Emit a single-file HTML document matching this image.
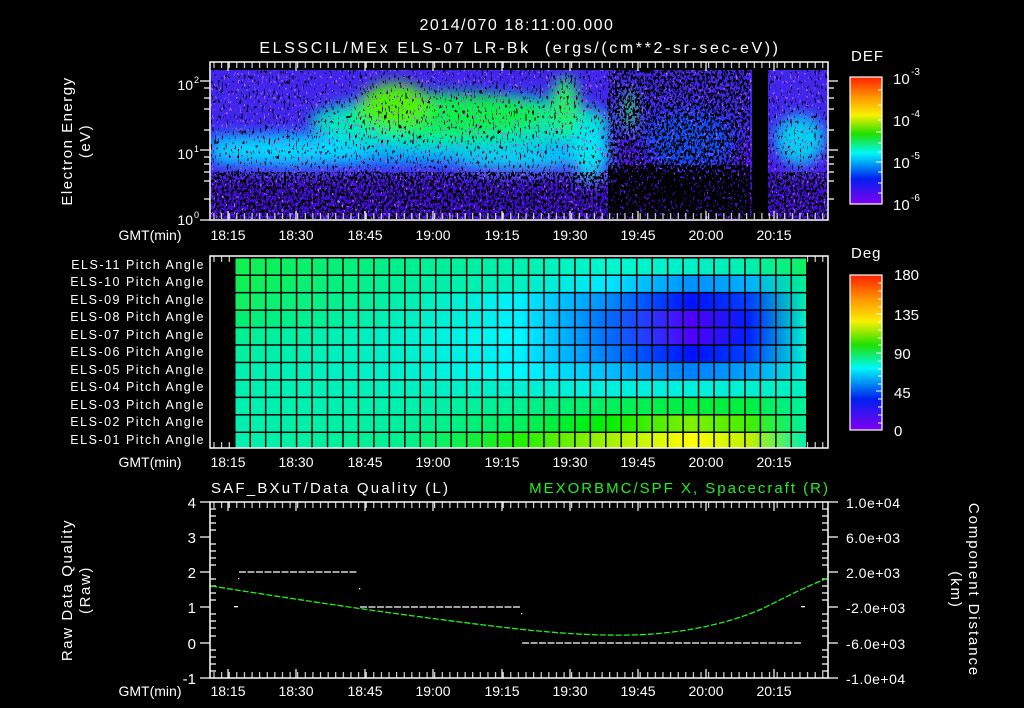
<!DOCTYPE html>
<html><head><meta charset="utf-8"><style>
html,body{margin:0;padding:0;background:#000;}
svg{display:block}
text{font-family:"Liberation Sans",sans-serif;fill:#fff;}
</style></head><body>
<svg width="1024" height="708" viewBox="0 0 1024 708" xmlns="http://www.w3.org/2000/svg">
<defs>
<linearGradient id="cb" x1="0" y1="0" x2="0" y2="1">
<stop offset="0" stop-color="#ff2000"/><stop offset="0.15" stop-color="#ff9000"/><stop offset="0.3" stop-color="#f8f000"/>
<stop offset="0.45" stop-color="#20e000"/><stop offset="0.6" stop-color="#00f8f8"/><stop offset="0.8" stop-color="#0020f0"/><stop offset="1" stop-color="#8000f0"/>
</linearGradient>
<filter id="blur6"><feGaussianBlur stdDeviation="7"/></filter>
<filter id="noise" x="0" y="0" width="100%" height="100%">
<feTurbulence type="fractalNoise" baseFrequency="0.55 0.2" numOctaves="2" seed="4"/>
<feColorMatrix type="matrix" values="0 0 0 0 0  0 0 0 0 0  0 0 0 0 0  3 0 0 0 -1.5"/>
<feComponentTransfer><feFuncA type="discrete" tableValues="0 1"/></feComponentTransfer>
</filter>
<filter id="noiseP" x="0" y="0" width="100%" height="100%">
<feTurbulence type="fractalNoise" baseFrequency="0.5 0.25" numOctaves="2" seed="11"/>
<feColorMatrix type="matrix" values="0 0 0 0 0.45  0 0 0 0 0.1  0 0 0 0 0.95  3 0 0 0 -1.6"/>
<feComponentTransfer><feFuncA type="discrete" tableValues="0 1"/></feComponentTransfer>
</filter>
<filter id="noise2" x="0" y="0" width="100%" height="100%">
<feTurbulence type="fractalNoise" baseFrequency="0.45 0.3" numOctaves="2" seed="9"/>
<feColorMatrix type="matrix" values="0 0 0 0 0  0 0 0 0 0  0 0 0 0 0  3 0 0 0 -1.1"/>
<feComponentTransfer><feFuncA type="discrete" tableValues="0 1"/></feComponentTransfer>
</filter>
<filter id="noise3" x="0" y="0" width="100%" height="100%">
<feTurbulence type="fractalNoise" baseFrequency="0.45 0.3" numOctaves="2" seed="21"/>
<feColorMatrix type="matrix" values="0 0 0 0 0  0 0 0 0 0  0 0 0 0 0  3 0 0 0 -0.7"/>
<feComponentTransfer><feFuncA type="discrete" tableValues="0 1"/></feComponentTransfer>
</filter>
<pattern id="tk" x="210" y="0" width="7.61" height="708" patternUnits="userSpaceOnUse"><rect x="3.5" y="0" width="1" height="708" fill="#fff"/></pattern>
<clipPath id="c1"><rect x="210" y="70" width="618" height="149"/></clipPath>
<linearGradient id="r1" x1="0" x2="1"><stop offset="0" stop-color="#10f050"/><stop offset="0.3" stop-color="#00f090"/><stop offset="0.5" stop-color="#00f0b0"/><stop offset="0.65" stop-color="#00f8d0"/><stop offset="0.8" stop-color="#00f0c8"/><stop offset="0.9" stop-color="#00f0b0"/><stop offset="1" stop-color="#10f060"/></linearGradient>
<linearGradient id="r2" x1="0" x2="1"><stop offset="0" stop-color="#10f050"/><stop offset="0.3" stop-color="#00f0a0"/><stop offset="0.5" stop-color="#00f0c0"/><stop offset="0.65" stop-color="#00e8ff"/><stop offset="0.8" stop-color="#0090ff"/><stop offset="0.9" stop-color="#00b0ff"/><stop offset="1" stop-color="#00f090"/></linearGradient>
<linearGradient id="r3" x1="0" x2="1"><stop offset="0" stop-color="#10f060"/><stop offset="0.3" stop-color="#00f0b0"/><stop offset="0.5" stop-color="#00f0ff"/><stop offset="0.65" stop-color="#0090ff"/><stop offset="0.8" stop-color="#0010ff"/><stop offset="0.9" stop-color="#0040ff"/><stop offset="1" stop-color="#00f0b0"/></linearGradient>
<linearGradient id="r4" x1="0" x2="1"><stop offset="0" stop-color="#00f070"/><stop offset="0.3" stop-color="#00f0c0"/><stop offset="0.5" stop-color="#00f0ff"/><stop offset="0.65" stop-color="#0070ff"/><stop offset="0.8" stop-color="#5000ff"/><stop offset="0.9" stop-color="#0020ff"/><stop offset="1" stop-color="#00f0c0"/></linearGradient>
<linearGradient id="r5" x1="0" x2="1"><stop offset="0" stop-color="#00f090"/><stop offset="0.3" stop-color="#00f0d0"/><stop offset="0.5" stop-color="#00f8ff"/><stop offset="0.65" stop-color="#0070ff"/><stop offset="0.8" stop-color="#5000ff"/><stop offset="0.9" stop-color="#0020ff"/><stop offset="1" stop-color="#00f0d0"/></linearGradient>
<linearGradient id="r6" x1="0" x2="1"><stop offset="0" stop-color="#00f0a0"/><stop offset="0.3" stop-color="#00f0d0"/><stop offset="0.5" stop-color="#00f0ff"/><stop offset="0.65" stop-color="#0080ff"/><stop offset="0.8" stop-color="#0010ff"/><stop offset="0.9" stop-color="#0040ff"/><stop offset="1" stop-color="#00f0d0"/></linearGradient>
<linearGradient id="r7" x1="0" x2="1"><stop offset="0" stop-color="#00f0b0"/><stop offset="0.3" stop-color="#00f0d0"/><stop offset="0.5" stop-color="#00f8ff"/><stop offset="0.65" stop-color="#00c0ff"/><stop offset="0.8" stop-color="#0080ff"/><stop offset="0.9" stop-color="#00a0ff"/><stop offset="1" stop-color="#00f0d0"/></linearGradient>
<linearGradient id="r8" x1="0" x2="1"><stop offset="0" stop-color="#00f0b0"/><stop offset="0.3" stop-color="#00f0c0"/><stop offset="0.5" stop-color="#00f0d0"/><stop offset="0.65" stop-color="#00f0e0"/><stop offset="0.8" stop-color="#00f0e0"/><stop offset="0.9" stop-color="#00f0d0"/><stop offset="1" stop-color="#00f0c0"/></linearGradient>
<linearGradient id="r9" x1="0" x2="1"><stop offset="0" stop-color="#00f0b0"/><stop offset="0.3" stop-color="#00f0b0"/><stop offset="0.5" stop-color="#00f090"/><stop offset="0.65" stop-color="#00f060"/><stop offset="0.8" stop-color="#00f040"/><stop offset="0.9" stop-color="#00f040"/><stop offset="1" stop-color="#00f0a0"/></linearGradient>
<linearGradient id="r10" x1="0" x2="1"><stop offset="0" stop-color="#00f0b0"/><stop offset="0.3" stop-color="#00f0a0"/><stop offset="0.5" stop-color="#00f060"/><stop offset="0.65" stop-color="#00f000"/><stop offset="0.8" stop-color="#80f000"/><stop offset="0.9" stop-color="#40f000"/><stop offset="1" stop-color="#00f0a0"/></linearGradient>
<linearGradient id="r11" x1="0" x2="1"><stop offset="0" stop-color="#00f0b0"/><stop offset="0.3" stop-color="#00f090"/><stop offset="0.5" stop-color="#20f000"/><stop offset="0.65" stop-color="#a0f000"/><stop offset="0.8" stop-color="#ffff00"/><stop offset="0.9" stop-color="#c0f000"/><stop offset="1" stop-color="#00f0b0"/></linearGradient>
<pattern id="gridv" x="234" y="0" width="15.46" height="708" patternUnits="userSpaceOnUse"><rect x="0" y="0" width="1.5" height="708" fill="#000"/></pattern>
<pattern id="gridh" x="0" y="257" width="1024" height="17.45" patternUnits="userSpaceOnUse"><rect x="0" y="0" width="1024" height="1.5" fill="#000"/></pattern>
</defs>

<text x="517" y="30" font-size="16" text-anchor="middle" letter-spacing="1.5">2014/070 18:11:00.000</text>
<text x="520" y="53" font-size="16" text-anchor="middle" letter-spacing="2.6" xml:space="preserve">ELSSCIL/MEx ELS-07 LR-Bk  (ergs/(cm**2-sr-sec-eV))</text>

<!-- TOP SPECTROGRAM -->
<g clip-path="url(#c1)">
<rect x="210" y="70" width="618" height="149" fill="#4a18e8"/>
<rect x="210" y="70" width="618" height="70" fill="#3a30f0" opacity="0.6"/>
<g filter="url(#blur6)">
<rect x="210" y="135" width="400" height="30" fill="#00a8ff"/>
<ellipse cx="290" cy="150" rx="80" ry="16" fill="#00d8ff"/>
<ellipse cx="460" cy="122" rx="150" ry="28" fill="#00e8c0"/>
<ellipse cx="450" cy="115" rx="100" ry="22" fill="#10f050"/>
<ellipse cx="395" cy="105" rx="35" ry="22" fill="#50f010"/>
<ellipse cx="515" cy="162" rx="60" ry="6" fill="#00f0f0"/>
<ellipse cx="565" cy="105" rx="14" ry="28" fill="#20f060"/>
<ellipse cx="590" cy="150" rx="18" ry="28" fill="#00e8f0"/>
<ellipse cx="630" cy="110" rx="6" ry="22" fill="#20f060"/>
<ellipse cx="690" cy="140" rx="45" ry="30" fill="#1050ff"/>
<ellipse cx="800" cy="140" rx="25" ry="25" fill="#00d0f0"/>
<rect x="210" y="180" width="618" height="40" fill="#4010d8"/>
</g>
<rect x="210" y="70" width="618" height="149" fill="#000" filter="url(#noise)"/>
<rect x="210" y="70" width="618" height="149" fill="#000" filter="url(#noiseP)"/>
<rect x="210" y="172" width="618" height="48" fill="#000" filter="url(#noise2)"/>
<rect x="608" y="165" width="142" height="55" fill="#000" filter="url(#noise3)"/>
<rect x="608" y="70" width="142" height="95" fill="#000" filter="url(#noise2)"/>
<rect x="752" y="70" width="16" height="149" fill="#000"/>
</g>
<rect x="210" y="62" width="618" height="158" fill="none" stroke="#fff" stroke-width="1.5"/>
<rect x="210" y="62" width="618" height="6" fill="url(#tk)"/>
<rect x="210" y="213" width="618" height="6" fill="url(#tk)"/>
<g stroke="#fff" stroke-width="1.2">
<path d="M228 62v9M296 62v9M365 62v9M433 62v9M502 62v9M570 62v9M638 62v9M706 62v9M774 62v9"/>
<path d="M228 220v-9M296 220v-9M365 220v-9M433 220v-9M502 220v-9M570 220v-9M638 220v-9M706 220v-9M774 220v-9"/>
<path d="M200 81h10M200 220h10M200 150h10M204 88h6M204 98h6M204 109h6M204 130h6M204 157h6M204 164h6M204 172h6M204 181h6M204 199h6"/>
<path d="M828 81h10M828 150h10M828 88h6M828 98h6M828 109h6M828 130h6M828 157h6M828 164h6M828 172h6M828 181h6M828 199h6"/>
</g>
<text x="193" y="90" font-size="14" text-anchor="end">10</text><text x="194" y="83" font-size="9">2</text>
<text x="193" y="159" font-size="14" text-anchor="end">10</text><text x="194" y="152" font-size="9">1</text>
<text x="193" y="225" font-size="14" text-anchor="end">10</text><text x="194" y="218" font-size="9">0</text>
<text transform="translate(72,141) rotate(-90)" font-size="15" text-anchor="middle" letter-spacing="1.5">Electron Energy</text>
<text transform="translate(90,141) rotate(-90)" font-size="15" text-anchor="middle" letter-spacing="1.5">(eV)</text>

<g font-size="14" text-anchor="middle">
<text x="150" y="240">GMT(min)</text>
<text x="228" y="240">18:15</text><text x="296" y="240">18:30</text><text x="365" y="240">18:45</text><text x="433" y="240">19:00</text><text x="502" y="240">19:15</text><text x="570" y="240">19:30</text><text x="638" y="240">19:45</text><text x="706" y="240">20:00</text><text x="774" y="240">20:15</text>
<text x="150" y="467">GMT(min)</text>
<text x="228" y="467">18:15</text><text x="296" y="467">18:30</text><text x="365" y="467">18:45</text><text x="433" y="467">19:00</text><text x="502" y="467">19:15</text><text x="570" y="467">19:30</text><text x="638" y="467">19:45</text><text x="706" y="467">20:00</text><text x="774" y="467">20:15</text>
<text x="150" y="696">GMT(min)</text>
<text x="228" y="696">18:15</text><text x="296" y="696">18:30</text><text x="365" y="696">18:45</text><text x="433" y="696">19:00</text><text x="502" y="696">19:15</text><text x="570" y="696">19:30</text><text x="638" y="696">19:45</text><text x="706" y="696">20:00</text><text x="774" y="696">20:15</text>
</g>

<text x="851" y="61" font-size="15" letter-spacing="1">DEF</text>
<rect x="850" y="77" width="32" height="127" fill="url(#cb)" stroke="#fff" stroke-width="1.2"/>
<g stroke="#fff" stroke-width="1"><path d="M878 90h4M878 105h4M878 120h4M876 132h6M878 143h4M878 152h4M876 162h6M878 172h4M878 183h4M878 193h4"/></g>
<g font-size="15"><text x="893" y="84">10</text><text x="911" y="75" font-size="10">-3</text>
<text x="893" y="126">10</text><text x="911" y="117" font-size="10">-4</text>
<text x="893" y="168">10</text><text x="911" y="159" font-size="10">-5</text>
<text x="893" y="210">10</text><text x="911" y="201" font-size="10">-6</text></g>

<rect x="234" y="257" width="572" height="18" fill="url(#r1)"/>
<rect x="234" y="274.4" width="572" height="18" fill="url(#r2)"/>
<rect x="234" y="291.9" width="572" height="18" fill="url(#r3)"/>
<rect x="234" y="309.3" width="572" height="18" fill="url(#r4)"/>
<rect x="234" y="326.8" width="572" height="18" fill="url(#r5)"/>
<rect x="234" y="344.2" width="572" height="18" fill="url(#r6)"/>
<rect x="234" y="361.7" width="572" height="18" fill="url(#r7)"/>
<rect x="234" y="379.1" width="572" height="18" fill="url(#r8)"/>
<rect x="234" y="396.6" width="572" height="18" fill="url(#r9)"/>
<rect x="234" y="414" width="572" height="18" fill="url(#r10)"/>
<rect x="234" y="431.5" width="572" height="17" fill="url(#r11)"/>
<rect x="234" y="256" width="573" height="192" fill="url(#gridv)"/>
<rect x="234" y="256" width="572" height="192" fill="url(#gridh)"/>
<rect x="210" y="256" width="618" height="192" fill="none" stroke="#fff" stroke-width="1.5"/>
<rect x="210" y="256" width="24" height="6" fill="url(#tk)"/><rect x="806" y="256" width="22" height="6" fill="url(#tk)"/>
<rect x="210" y="442" width="24" height="6" fill="url(#tk)"/><rect x="806" y="442" width="22" height="6" fill="url(#tk)"/>
<g font-size="12.5" text-anchor="end" letter-spacing="1.5">
<text x="205" y="269">ELS-11 Pitch Angle</text><text x="205" y="286">ELS-10 Pitch Angle</text><text x="205" y="304">ELS-09 Pitch Angle</text><text x="205" y="321">ELS-08 Pitch Angle</text><text x="205" y="339">ELS-07 Pitch Angle</text><text x="205" y="356">ELS-06 Pitch Angle</text><text x="205" y="374">ELS-05 Pitch Angle</text><text x="205" y="391">ELS-04 Pitch Angle</text><text x="205" y="409">ELS-03 Pitch Angle</text><text x="205" y="426">ELS-02 Pitch Angle</text><text x="205" y="444">ELS-01 Pitch Angle</text>
</g>

<text x="851" y="258" font-size="15" letter-spacing="1">Deg</text>
<rect x="850" y="275" width="32" height="155" fill="url(#cb)" stroke="#fff" stroke-width="1.2"/>
<g stroke="#fff" stroke-width="1"><path d="M878 283h4M878 291h4M878 299h4M878 307h4M876 314h6M878 322h4M878 330h4M878 338h4M876 353h6M878 345h4M878 361h4M878 369h4M878 376h4M876 391h6M878 384h4M878 399h4M878 407h4M878 415h4M878 423h4"/></g>
<g font-size="15"><text x="894" y="280">180</text><text x="894" y="320">135</text><text x="894" y="359">90</text><text x="894" y="398">45</text><text x="894" y="436">0</text></g>

<text x="211" y="493" font-size="15" letter-spacing="2.2">SAF_BXuT/Data Quality (L)</text>
<text x="830" y="493" font-size="15" text-anchor="end" letter-spacing="2" style="fill:#20f020">MEXORBMC/SPF X, Spacecraft (R)</text>
<rect x="210" y="502" width="618" height="176" fill="none" stroke="#fff" stroke-width="1.5"/>
<rect x="210" y="502" width="618" height="6" fill="url(#tk)"/>
<rect x="210" y="672" width="618" height="6" fill="url(#tk)"/>
<g stroke="#fff" stroke-width="1.2">
<path d="M228 502v9M296 502v9M365 502v9M433 502v9M502 502v9M570 502v9M638 502v9M706 502v9M774 502v9"/>
<path d="M228 678v-9M296 678v-9M365 678v-9M433 678v-9M502 678v-9M570 678v-9M638 678v-9M706 678v-9M774 678v-9"/>
<path d="M200 502h10M200 537h10M200 572h10M200 607h10M200 643h10M200 678h10M210 509h6M210 516h6M210 523h6M210 530h6M210 544h6M210 551h6M210 558h6M210 565h6M210 579h6M210 586h6M210 593h6M210 600h6M210 614h6M210 621h6M210 628h6M210 636h6M210 650h6M210 657h6M210 664h6M210 671h6"/>
<path d="M828 502h10M828 537h10M828 572h10M828 607h10M828 643h10M828 678h10M822 509h6M822 516h6M822 523h6M822 530h6M822 544h6M822 551h6M822 558h6M822 565h6M822 579h6M822 586h6M822 593h6M822 600h6M822 614h6M822 621h6M822 628h6M822 636h6M822 650h6M822 657h6M822 664h6M822 671h6"/>
</g>
<g font-size="15" text-anchor="end"><text x="196" y="508">4</text><text x="196" y="543">3</text><text x="196" y="578">2</text><text x="196" y="613">1</text><text x="196" y="649">0</text><text x="196" y="684">-1</text></g>
<g font-size="14" letter-spacing="0.5"><text x="846" y="508">1.0e+04</text><text x="846" y="543">6.0e+03</text><text x="846" y="578">2.0e+03</text><text x="846" y="613">-2.0e+03</text><text x="846" y="649">-6.0e+03</text><text x="846" y="684">-1.0e+04</text></g>
<text transform="translate(72,590) rotate(-90)" font-size="15" text-anchor="middle" letter-spacing="1.6">Raw Data Quality</text>
<text transform="translate(90,590) rotate(-90)" font-size="15" text-anchor="middle" letter-spacing="1.6">(Raw)</text>
<text transform="translate(969,590) rotate(90)" font-size="15" text-anchor="middle" letter-spacing="1.9">Component Distance</text>
<text transform="translate(951,590) rotate(90)" font-size="15" text-anchor="middle" letter-spacing="1.9">(km)</text>
<g stroke="#fff" stroke-width="1.2" stroke-dasharray="7 1.5" fill="none">
<path d="M239 572H358"/><path d="M360 607H521"/><path d="M522 643H801"/>
</g>
<g fill="#fff"><rect x="234" y="606" width="4" height="1.3"/><rect x="238" y="578" width="1.3" height="1.3"/><rect x="359" y="588" width="1.3" height="1.3"/><rect x="521" y="613" width="1.3" height="1.3"/><rect x="801" y="606" width="4" height="1.3"/></g>
<path d="M211 586 C300 600,380 612,460 622 C530 631,580 636,630 635 C690 634,740 620,770 605 C795 592,815 583,828 578" fill="none" stroke="#20f020" stroke-width="1.3" stroke-dasharray="6 2"/>
</svg>
</body></html>
